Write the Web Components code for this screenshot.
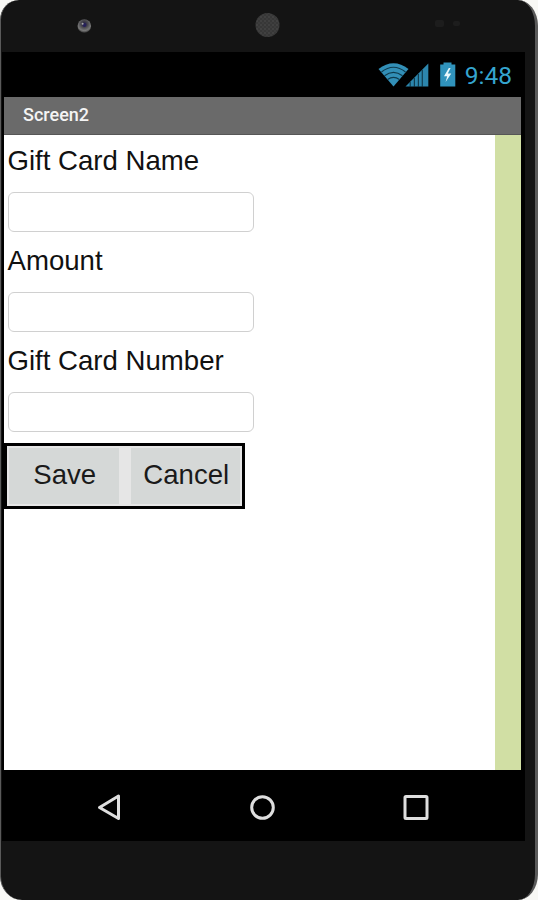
<!DOCTYPE html>
<html lang="en">
<head>
<meta charset="utf-8">
<title>Screen2</title>
<style>
  body {
    margin: 0;
    background: #f8f8f5;
    overflow: hidden;
  }
</style>
</head>
<body>
<phone-frame>
  <status-bar time="9:48"></status-bar>
  <title-bar>Screen2</title-bar>
  <app-screen>
    <form-field label="Gift Card Name"></form-field>
    <form-field label="Amount"></form-field>
    <form-field label="Gift Card Number"></form-field>
    <button-row>
      <app-button>Save</app-button>
      <app-button>Cancel</app-button>
    </button-row>
  </app-screen>
  <nav-bar></nav-bar>
</phone-frame>

<script>
/** <phone-frame>: device body with the camera strip on top and the display below */
class PhoneFrame extends HTMLElement {
  constructor() {
    super();
    this.attachShadow({ mode: 'open' }).innerHTML = `
      <style>
        :host {
          display: block;
          box-sizing: border-box;
          width: 538px;
          height: 900px;
          background: #141414;
          border: solid #5a5a5a;
          border-width: 0 3px 0 1px;
          border-radius: 19px 20px 20px 22px / 20px 26px 26px 24px;
          overflow: hidden;
        }
        .top {
          height: 52px;
        }
        .top svg {
          display: block;
        }
        .display {
          display: flex;
          flex-direction: column;
          box-sizing: border-box;
          width: 523px;
          height: 789px;
          margin-left: 1px;
          padding: 0 4px 0 2px;
          background: #000;
        }
      </style>
      <div class="top">
        <svg width="534" height="52" viewBox="1 0 534 52">
          <defs>
            <radialGradient id="lens" cx="50%" cy="35%" r="65%">
              <stop offset="0" stop-color="#24203f"/>
              <stop offset=".4" stop-color="#49484e"/>
              <stop offset=".75" stop-color="#777"/>
              <stop offset="1" stop-color="#333"/>
            </radialGradient>
            <pattern id="mesh" width="4" height="4" patternUnits="userSpaceOnUse">
              <rect width="4" height="4" fill="#373737"/>
              <circle cx="1" cy="1" r="1" fill="#444"/>
              <circle cx="3" cy="3" r="1" fill="#3e3e3e"/>
            </pattern>
          </defs>
          <circle cx="84.3" cy="26" r="6.8" fill="url(#lens)"/>
          <circle cx="84.5" cy="25" r="2" fill="#26205a"/>
          <circle cx="82.6" cy="23.7" r="1" fill="#aaa"/>
          <circle cx="267.5" cy="25" r="12" fill="url(#mesh)"/>
          <rect x="435" y="20" width="9" height="7" rx="2" fill="#1d1d1d"/>
          <rect x="453" y="21" width="7" height="5" rx="2" fill="#1d1d1d"/>
        </svg>
      </div>
      <div class="display"><slot></slot></div>
    `;
  }
}

/** <status-bar time>: wifi, signal, battery and clock */
class StatusBar extends HTMLElement {
  constructor() {
    super();
    this.attachShadow({ mode: 'open' }).innerHTML = `
      <style>
        :host {
          display: flex;
          align-items: center;
          justify-content: flex-end;
          flex: none;
          height: 45px;
          padding-right: 9px;
          color: #35a5cf;
          font: 24.5px/45px Roboto, sans-serif;
        }
        svg {
          display: block;
          margin-right: 9px;
        }
        .time {
          padding-top: 2px;
        }
      </style>
      <svg width="78" height="26" viewBox="378 62 78 26">
        <path d="M378.5 69Q393.5 57.5 408.5 69L393.5 86.5Z" fill="#328fb7"/>
        <g fill="none" stroke="#0e3a4d" stroke-width="1.2">
          <path d="M381.5 72Q393.5 62.5 405.5 72"/>
          <path d="M384.5 75.8Q393.5 69 402.5 75.8"/>
          <path d="M387.6 79.4Q393.5 75.2 399.4 79.4"/>
        </g>
        <path d="M405.5 86.5L428.3 63.5V86.5Z" fill="#2c86ad"/>
        <path d="M410.200 82V87M414.400 78V87M418.400 74V87M422.300 70V87"
              stroke="#0b2c3a" stroke-width="1.2" opacity=".8"/>
        <path d="M443.500 62.500H451.500V64.500H455.300V86.500H440.200V64.500H443.500Z" fill="#3093bc"/>
        <path d="M448.800 68L444 76.300H447.200L445.600 82L451.300 73.600H447.800L450.600 68Z" fill="#eaf8fc"/>
      </svg>
      <span class="time"></span>
    `;
  }

  connectedCallback() {
    this.shadowRoot.querySelector('.time').textContent = this.getAttribute('time') || '';
  }
}

class TitleBar extends HTMLElement {
  constructor() {
    super();
    this.attachShadow({ mode: 'open' }).innerHTML = `
      <style>
        :host {
          display: block;
          flex: none;
          box-sizing: border-box;
          height: 38px;
          padding-left: 19px;
          border-bottom: 1px solid #565656;
          background: #6a6a6a;
          color: #f4f4f4;
          font: 500 18px/36px Roboto, sans-serif;
        }
      </style>
      <slot></slot>
    `;
  }
}

/** <app-screen>: form area with the green strip along its right edge */
class AppScreen extends HTMLElement {
  constructor() {
    super();
    this.attachShadow({ mode: 'open' }).innerHTML = `
      <style>
        :host {
          display: flex;
          flex: none;
          height: 635px;
          background: #fff;
          color: #111;
          font: 27.6px/32px "Liberation Sans", Arial, sans-serif;
        }
        .content {
          flex: 1;
          padding-top: 10px;
        }
        .strip {
          width: 26px;
          background: #d1dfa4;
        }
      </style>
      <div class="content"><slot></slot></div>
      <div class="strip"></div>
    `;
  }
}

/** <form-field label>: caption over a text input */
class FormField extends HTMLElement {
  constructor() {
    super();
    this.attachShadow({ mode: 'open' }).innerHTML = `
      <style>
        :host {
          display: block;
          height: 100px;
          padding-left: 3.5px;
        }
        label {
          display: block;
          height: 47px;
          white-space: nowrap;
        }
        input {
          display: block;
          box-sizing: border-box;
          width: 246px;
          height: 40px;
          padding: 4px 8px;
          border: 1.5px solid #d0d0d0;
          border-radius: 6px;
          background: #fff;
          font: inherit;
        }
      </style>
      <label for="field"></label>
      <input id="field" type="text">
    `;
  }

  connectedCallback() {
    this.shadowRoot.querySelector('label').textContent = this.getAttribute('label') || '';
  }
}

class ButtonRow extends HTMLElement {
  constructor() {
    super();
    this.attachShadow({ mode: 'open' }).innerHTML = `
      <style>
        :host {
          display: flex;
          gap: 12px;
          box-sizing: border-box;
          width: 241px;
          height: 66px;
          margin-top: -2px;
          padding: 2px;
          border: 3px solid #000;
          background: #e6e6e6;
        }
      </style>
      <slot></slot>
    `;
  }
}

class AppButton extends HTMLElement {
  constructor() {
    super();
    this.attachShadow({ mode: 'open' }).innerHTML = `
      <style>
        :host {
          display: block;
          flex: 1 1 0;
        }
        button {
          display: block;
          width: 100%;
          height: 100%;
          padding: 0 0 3px 2px;
          border: 0;
          background: #d5d8d7;
          color: #1a1a1a;
          font: inherit;
          white-space: nowrap;
        }
      </style>
      <button type="button"><slot></slot></button>
    `;
  }
}

/** <nav-bar>: back, home and recents */
class NavBar extends HTMLElement {
  constructor() {
    super();
    this.attachShadow({ mode: 'open' }).innerHTML = `
      <style>
        :host {
          display: flex;
          justify-content: space-between;
          align-items: center;
          flex: none;
          height: 71px;
          padding: 0 90px;
          padding-top: 1px;
        }
        svg {
          display: block;
          fill: none;
          stroke: #dedede;
          stroke-width: 3;
          stroke-linejoin: round;
        }
      </style>
      <svg width="30" height="30"><path d="M24.500 4V26.500L5.500 15.500Z"/></svg>
      <svg width="30" height="30"><circle cx="14.5" cy="15.5" r="10.800"/></svg>
      <svg width="30" height="30"><rect x="4" y="4.5" width="22" height="22" rx="1"/></svg>
    `;
  }
}

customElements.define('phone-frame', PhoneFrame);
customElements.define('status-bar', StatusBar);
customElements.define('title-bar', TitleBar);
customElements.define('app-screen', AppScreen);
customElements.define('form-field', FormField);
customElements.define('button-row', ButtonRow);
customElements.define('app-button', AppButton);
customElements.define('nav-bar', NavBar);
</script>
</body>
</html>
